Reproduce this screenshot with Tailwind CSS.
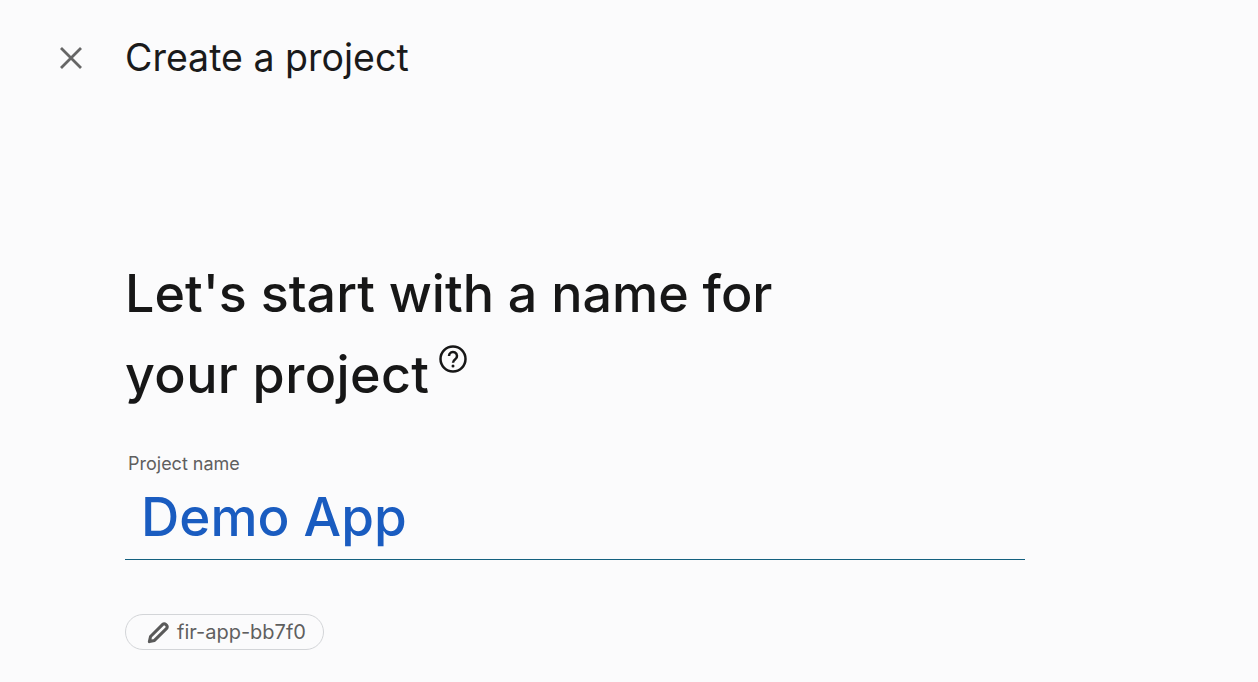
<!DOCTYPE html>
<html lang="en">
<head>
    <meta charset="UTF-8">
    <meta name="viewport" content="width=device-width, initial-scale=1.0">
    <script src="https://cdn.jsdelivr.net/npm/@tailwindcss/browser@4"></script>
    <title>Create a project</title>
</head>
<body class="bg-[#fbfbfc] font-['Inter',sans-serif] h-[682px] overflow-hidden">
    <header class="flex items-center h-[116px] pl-[58px]">
        <button class="w-[26px] h-[26px] text-[#666666]">
            <svg viewBox="0 0 26 26" class="w-[26px] h-[26px]" fill="none" stroke="currentColor" stroke-width="2.8"><path d="M3 3L23 23M23 3L3 23"/></svg>
        </button>
        <h1 class="ml-[41px] text-[37.5px] text-[#1a1a1a]">Create a project</h1>
    </header>

    <main class="pl-[125px] pt-[137px]">
        <h2 class="text-[52px] leading-[81px] font-medium text-[#171717]">
            Let's start with a name for<br>
            <span class="relative tracking-[0.4px]">your project
                <svg viewBox="0 0 24 24" class="absolute left-[313px] top-[1px] w-[30px] h-[30px]" fill="none" stroke="#171717" stroke-width="2"><circle cx="12" cy="12" r="10"/><path d="M8.8 9.6a3.2 3.2 0 1 1 5 2.6c-1.2.9-1.8 1.4-1.8 2.8"/><circle cx="12" cy="17.6" r="1.2" fill="#171717" stroke="none"/></svg>
            </span>
        </h2>

        <div class="w-[900px] mt-[37px] border-b border-b-[#14607f]">
            <label class="block pl-[3px] text-[18px] leading-[24px] text-[#5f5f5f]">Project name</label>
            <div class="pl-[16px] text-[53px] leading-[72px] font-medium text-[#1a5cc0] h-[83px] pt-[5px]">Demo App</div>
        </div>

        <div class="inline-flex items-center h-[36px] w-[199px] mt-[54px] pl-[21px] border border-[#d3d5d8] rounded-full text-[20px] text-[#5f5f5f]">
            <svg viewBox="0 0 24 24" class="w-[23px] h-[23px]" fill="none" stroke="#5a5a5a" stroke-width="3.2" stroke-linejoin="round"><path d="M2.5 21.5l1.2-5.3L16.4 3.5a2.1 2.1 0 0 1 3 0l1.1 1.1a2.1 2.1 0 0 1 0 3L7.8 20.3z"/></svg>
            <span class="ml-[7px]">fir-app-bb7f0</span>
        </div>
    </main>
</body>
</html>
